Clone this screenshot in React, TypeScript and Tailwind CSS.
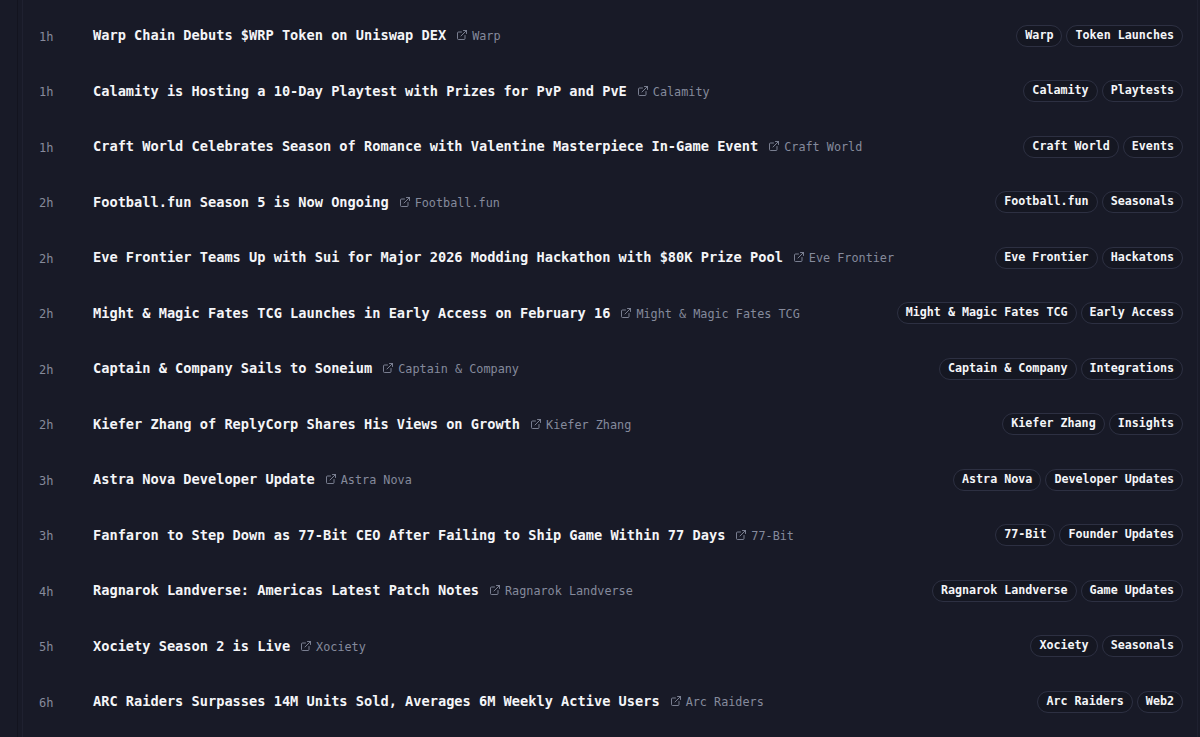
import React from "react";
import { ExternalLink } from "lucide-react";

const rows: [string, string, string, string, string][] = [
  ["1h", "Warp Chain Debuts $WRP Token on Uniswap DEX", "Warp", "Warp", "Token Launches"],
  ["1h", "Calamity is Hosting a 10-Day Playtest with Prizes for PvP and PvE", "Calamity", "Calamity", "Playtests"],
  ["1h", "Craft World Celebrates Season of Romance with Valentine Masterpiece In-Game Event", "Craft World", "Craft World", "Events"],
  ["2h", "Football.fun Season 5 is Now Ongoing", "Football.fun", "Football.fun", "Seasonals"],
  ["2h", "Eve Frontier Teams Up with Sui for Major 2026 Modding Hackathon with $80K Prize Pool", "Eve Frontier", "Eve Frontier", "Hackatons"],
  ["2h", "Might & Magic Fates TCG Launches in Early Access on February 16", "Might & Magic Fates TCG", "Might & Magic Fates TCG", "Early Access"],
  ["2h", "Captain & Company Sails to Soneium", "Captain & Company", "Captain & Company", "Integrations"],
  ["2h", "Kiefer Zhang of ReplyCorp Shares His Views on Growth", "Kiefer Zhang", "Kiefer Zhang", "Insights"],
  ["3h", "Astra Nova Developer Update", "Astra Nova", "Astra Nova", "Developer Updates"],
  ["3h", "Fanfaron to Step Down as 77-Bit CEO After Failing to Ship Game Within 77 Days", "77-Bit", "77-Bit", "Founder Updates"],
  ["4h", "Ragnarok Landverse: Americas Latest Patch Notes", "Ragnarok Landverse", "Ragnarok Landverse", "Game Updates"],
  ["5h", "Xociety Season 2 is Live", "Xociety", "Xociety", "Seasonals"],
  ["6h", "ARC Raiders Surpasses 14M Units Sold, Averages 6M Weekly Active Users", "Arc Raiders", "Arc Raiders", "Web2"],
];

const mono = { fontFamily: '"DejaVu Sans Mono", "Liberation Mono", monospace' };

export default function App() {
  return (
    <div className="w-[1200px] h-[737px] overflow-hidden bg-[#181a27]" style={mono}>
      <div className="ml-[17px] h-full border-l border-[#13141f]">
        <div className="ml-[4px] mr-[2px] h-full border-x border-[#1f2130] pt-[8px]">
          {rows.map(([t, title, src, tag1, tag2], i) => (
            <div key={i} className="flex items-center h-[55.5px] pl-[16px] pr-[14px]">
              <div className="w-[54px] shrink-0 text-[12px] text-[#868a9b] relative top-[1px]">{t}</div>
              <div className="flex items-baseline flex-1 min-w-0">
                <span className="text-[13.65px] font-bold text-[#f4f5f8] whitespace-nowrap">{title}</span>
                <span className="flex items-baseline ml-[10px] text-[#858a9c] whitespace-nowrap">
                  <ExternalLink size={12} strokeWidth={1.8} className="mr-[4px] relative top-[1px]" />
                  <span className="text-[11.8px]">{src}</span>
                </span>
              </div>
              <div className="flex items-center gap-[4px] shrink-0">
                {[tag1, tag2].map((g, j) => (
                  <span
                    key={j}
                    className="h-[22px] flex items-center px-[8px] rounded-full border border-[#2d3042] bg-[#151722] text-[11.7px] font-bold text-[#f4f5f8] whitespace-nowrap"
                  >
                    {g}
                  </span>
                ))}
              </div>
            </div>
          ))}
        </div>
      </div>
    </div>
  );
}
